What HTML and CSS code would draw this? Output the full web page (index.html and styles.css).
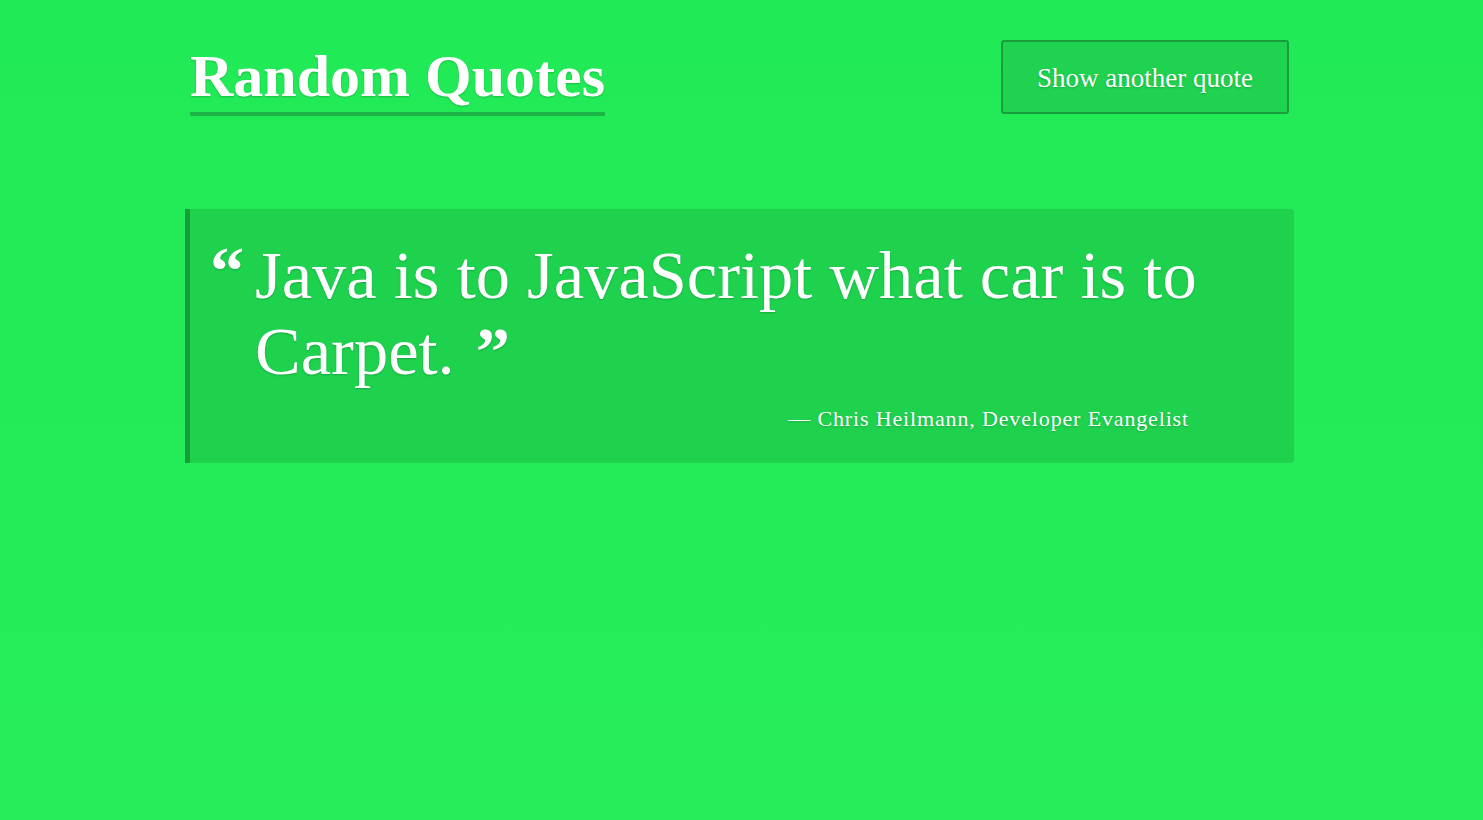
FILE: index.html
```html
<!DOCTYPE html>
<html>
<head>
<meta charset="utf-8">
<link rel="stylesheet" href="styles.css">
</head>
<body>
<div class="page">
  <header class="header">
    <h1 class="title">Random Quotes</h1>
    <button class="btn">Show another quote</button>
  </header>
  <blockquote class="quote">
    <p class="quote-text"><span class="mark-open">“</span>Java is to JavaScript what car is to Carpet. <span class="mark-close">”</span></p>
    <p class="author">— Chris Heilmann, Developer Evangelist</p>
  </blockquote>
</div>
</body>
</html>
```
FILE: styles.css
```css
html, body {
  margin: 0;
  padding: 0;
}
body {
  background: linear-gradient(to bottom, #21ea57, #26ed59);
  min-height: 820px;
  font-family: "Liberation Serif", "DejaVu Serif", serif;
  color: #fff;
}
.page {
  width: 1109px;
  margin: 0 auto;
  padding: 40px 4px 0 0;
}
.header {
  display: flex;
  justify-content: space-between;
  align-items: flex-start;
  padding-left: 5px;
}
.title {
  margin: 0;
  font-size: 60px;
  font-weight: bold;
  line-height: 72px;
  border-bottom: 4px solid #1db447;
  text-shadow: 0 1px 2px rgba(0,0,0,0.2);
}
.btn {
  margin-right: 5px;
  width: 288px;
  height: 74px;
  padding-top: 3px;
  background: #1fd24f;
  border: 2px solid #199c3b;
  border-radius: 3px;
  color: #fff;
  font-family: inherit;
  font-size: 27px;
  text-shadow: 0 1px 2px rgba(0,0,0,0.2);
}
.quote {
  margin: 93px 0 0 0;
  background: #1ed24e;
  border-left: 5px solid #179c3a;
  border-radius: 0 4px 4px 0;
  padding: 28px 85px 31px 65px;
  text-shadow: 0 1px 2px rgba(0,0,0,0.2);
}
.quote-text {
  margin: 0;
  font-size: 68.5px;
  line-height: 76px;
  position: relative;
}
.mark-open {
  position: absolute;
  left: -45px;
  top: -4px;
  font-weight: bold;
}
.mark-close {
  font-weight: bold;
  margin-left: 4px;
}
.author {
  margin: 17px 20px 0 0;
  text-align: right;
  font-size: 22px;
  letter-spacing: 0.85px;
}
```
